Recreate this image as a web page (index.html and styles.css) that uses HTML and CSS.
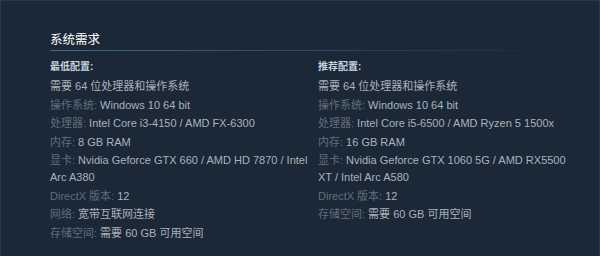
FILE: index.html
```html
<!DOCTYPE html>
<html lang="zh-CN">
<head>
<meta charset="utf-8">
<link rel="stylesheet" href="styles.css">
</head>
<body>
<div class="frame">
  <h2 class="title">系统需求</h2>
  <div class="cols">
    <div class="col">
      <div class="col-head">最低配置:</div>
      <ul class="reqs">
        <li>需要 64 位处理器和操作系统</li>
        <li><span class="lbl">操作系统:</span> Windows 10 64 bit</li>
        <li><span class="lbl">处理器:</span> Intel Core i3-4150 / AMD FX-6300</li>
        <li><span class="lbl">内存:</span> 8 GB RAM</li>
        <li><span class="lbl">显卡:</span> Nvidia Geforce GTX 660 / AMD HD 7870 / Intel Arc A380</li>
        <li><span class="lbl">DirectX 版本:</span> 12</li>
        <li><span class="lbl">网络:</span> 宽带互联网连接</li>
        <li><span class="lbl">存储空间:</span> 需要 60 GB 可用空间</li>
      </ul>
    </div>
    <div class="col">
      <div class="col-head">推荐配置:</div>
      <ul class="reqs">
        <li>需要 64 位处理器和操作系统</li>
        <li><span class="lbl">操作系统:</span> Windows 10 64 bit</li>
        <li><span class="lbl">处理器:</span> Intel Core i5-6500 / AMD Ryzen 5 1500x</li>
        <li><span class="lbl">内存:</span> 16 GB RAM</li>
        <li><span class="lbl">显卡:</span> Nvidia Geforce GTX 1060 5G / AMD RX5500 XT / Intel Arc A580</li>
        <li><span class="lbl">DirectX 版本:</span> 12</li>
        <li><span class="lbl">存储空间:</span> 需要 60 GB 可用空间</li>
      </ul>
    </div>
  </div>
</div>
</body>
</html>
```

FILE: styles.css
```css
html, body {
  margin: 0;
  padding: 0;
  background: #1b2838;
}

.frame {
  box-sizing: border-box;
  width: 600px;
  height: 256px;
  border: 1px solid #2a3849;
  border-bottom: none;
  padding: 31px 0 0 49px;
  font-family: "Liberation Sans", "Noto Sans CJK SC", sans-serif;
}

.title {
  margin: 0;
  width: 520px;
  padding-bottom: 3px;
  font-size: 12.5px;
  line-height: 16px;
  font-weight: normal;
  color: #ffffff;
  background: linear-gradient(to right, #3d6c8d 0%, rgba(61, 108, 141, 0.15) 85%, rgba(61, 108, 141, 0) 100%) no-repeat left bottom / 100% 1px;
}

.cols {
  display: flex;
  gap: 8px;
  margin-top: 9px;
}

.col {
  width: 260px;
}

.col-head {
  font-size: 10px;
  line-height: 14px;
  font-weight: bold;
  color: #c6d4df;
}

.reqs {
  list-style: none;
  margin: 4px 0 0;
  padding: 0;
  font-size: 11px;
  line-height: 17px;
  color: #acb2b8;
}

.reqs li {
  margin-bottom: 1.5px;
}

.lbl {
  color: #626d79;
}
```
